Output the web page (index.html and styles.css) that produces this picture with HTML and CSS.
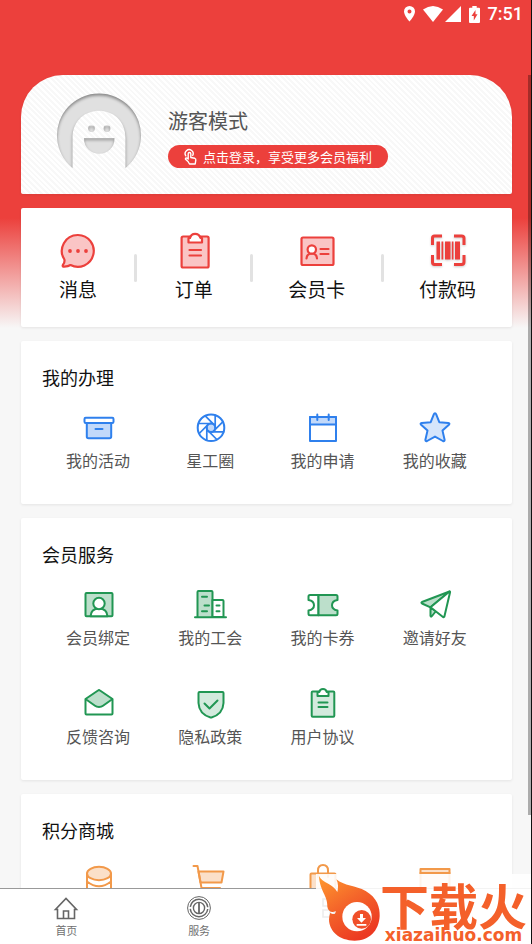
FILE: index.html
```html
<!DOCTYPE html>
<html lang="zh-CN">
<head>
<meta charset="utf-8">
<meta name="viewport" content="width=device-width, initial-scale=1">
<title>会员中心</title>
<link rel="stylesheet" href="styles.css">
</head>
<body>
<div class="app">
  <header class="status">
    <svg class="pin" width="11" height="16" viewBox="0 0 11 16"><path fill="#fff" fill-rule="evenodd" d="M5.500 0A5.500 5.500 0 0 0 0 5.500C0 9.500 5.500 15.500 5.500 15.500S11 9.500 11 5.500A5.500 5.500 0 0 0 5.500 0ZM5.500 3.600a2 2 0 1 1 0 4 2 2 0 0 1 0-4Z"/></svg>
    <svg class="wifi" width="20" height="16" viewBox="0 0 20 16"><path fill="#fff" d="M0 3.500Q10-3.500 20 3.500L10 16Z"/></svg>
    <svg class="signal" width="16" height="16" viewBox="0 0 16 16"><path fill="#fff" d="M16 0V16H0Z"/></svg>
    <svg class="battery" width="11" height="17" viewBox="0 0 11 17"><path fill="#fff" fill-rule="evenodd" d="M3.300 0h4.400v1.800H10q1 0 1 1V16q0 1-1 1H1q-1 0-1-1V2.800q0-1 1-1h2.300ZM6.500 4 2.500 10h2.300v4.500L8.500 8.300H6.500Z"/></svg>
    <time>7:51</time>
  </header>

  <main class="content">
    <section class="card profile">
      <svg class="avatar" width="84" height="75" viewBox="0 0 84 75">
        <defs>
          <filter id="inset" x="0" y="0" width="1" height="1" color-interpolation-filters="sRGB">
            <feComponentTransfer in="SourceAlpha" result="inv"><feFuncA type="table" tableValues="1 0"/></feComponentTransfer>
            <feGaussianBlur in="inv" stdDeviation="1.800"/>
            <feOffset dy="2" result="off"/>
            <feFlood flood-color="#000" flood-opacity=".4"/>
            <feComposite in2="off" operator="in"/>
            <feComposite in2="SourceAlpha" operator="in" result="shade"/>
            <feMerge><feMergeNode in="SourceGraphic"/><feMergeNode in="shade"/></feMerge>
          </filter>
          <filter id="ring" x="-.1" y="-.1" width="1.2" height="1.2" color-interpolation-filters="sRGB">
            <feComponentTransfer in="SourceAlpha" result="inv"><feFuncA type="table" tableValues="1 0"/></feComponentTransfer>
            <feGaussianBlur in="inv" stdDeviation="1.800"/>
            <feOffset dy="2" result="off"/>
            <feFlood flood-color="#000" flood-opacity=".4"/>
            <feComposite in2="off" operator="in"/>
            <feComposite in2="SourceAlpha" operator="in" result="shade"/>
            <feMerge><feMergeNode in="SourceGraphic"/><feMergeNode in="shade"/></feMerge>
          </filter>
        </defs>
        <g fill="#e0e0e0">
          <path filter="url(#ring)" d="M15.500 75A42 42 0 1 1 68.500 75V45C68.500 8.500 15.500 8.500 15.500 45Z"/>
          <circle filter="url(#ring)" cx="34.500" cy="35.500" r="3.400"/>
          <circle filter="url(#ring)" cx="50" cy="35.500" r="3.400"/>
          <path filter="url(#ring)" d="M27 45H57.500C57.500 66 27 66 27 45Z"/>
        </g>
      </svg>
      <div class="who">
        <h1>游客模式</h1>
        <button class="login" type="button">
          <svg width="13" height="16" viewBox="0 0 13 16" fill="none" stroke="#fff" stroke-width="1.400" stroke-linecap="round" stroke-linejoin="round"><path d="M1.800 6.800A4 4 0 1 1 8.700 6.500M4 12.500 1.500 10.200Q1.200 8.600 3 9.200L4.200 10V4.800a1.300 1.300 0 0 1 2.600 0V8.500l4 .8q1.200.4 1 1.800L11.200 15H5.500Z"/></svg>
          <span>点击登录，享受更多会员福利</span>
        </button>
      </div>
    </section>

    <nav class="card quick" aria-label="快捷入口">
      <a href="#"><svg class="red" width="36" height="36" viewBox="0 0 36 36"><path d="M18 2A15.900 15.900 0 1 1 10.500 32Q8 33.800 3.400 33.600 2.200 33.200 3 31.800 5 29.500 4.400 26.500A15.900 15.900 0 0 1 18 2Z"/><g class="dot"><circle cx="10" cy="18" r="1.900"/><circle cx="18" cy="18" r="1.900"/><circle cx="26" cy="18" r="1.900"/></g></svg><span>消息</span></a>
      <i></i>
      <a href="#"><svg class="red" width="36" height="36" viewBox="-1 0 36 36"><rect x="4.600" y="3.500" width="27" height="31" rx="1.500"/><path class="paper" d="M11.500 9.500V5H13Q14 .8 18.100.8T23.500 5H25V9.500Z"/><path class="line" d="M12.500 17h11.500M12.500 22.500h11.500"/></svg><span>订单</span></a>
      <i></i>
      <a href="#"><svg class="red" width="36" height="36" viewBox="-1 0 36 36"><rect x="1.500" y="4.500" width="32" height="27.500" rx="1.500"/><path class="line" d="M6.500 25.500Q7 20.500 11.800 20.500T17 25.500M20.500 16h8M20.500 21h8"/><circle class="paper" cx="11.800" cy="16.500" r="4.200"/></svg><span>会员卡</span></a>
      <i></i>
      <a href="#"><svg class="scan" width="36" height="36" viewBox="-1 0 36 36"><path class="line" d="M2.500 12V5Q2.500 3 4.500 3H12M24 3h7.500Q34 3 34 5v7M34 22v7Q34 31.500 31.500 31.500H24M12 31.500H4.500Q2.500 31.500 2.500 29V22"/><path class="bars" d="M6.500 8.500h3.500v18H6.500ZM11.500 8.500h1.800v18h-1.800ZM15 8.500h5.500v18H15ZM21.800 8.500h1.700v18h-1.700ZM25 8.500h5v18h-5Z"/></svg><span>付款码</span></a>
    </nav>

    <section class="card group">
      <h2>我的办理</h2>
      <div class="grid">
        <a href="#"><svg class="blue" width="32" height="32" viewBox="-1 0 32 32"><path d="M3.800 11H28.200V24.500Q28.200 26.300 26.500 26.300H5.500Q3.800 26.300 3.800 24.500Z"/><rect class="paper" x="1.500" y="5.700" width="29" height="5.300" rx="1.200"/><path class="line" d="M12.500 17h7"/></svg><span>我的活动</span></a>
        <a href="#"><svg class="blue" width="32" height="32" viewBox="-1 0 32 32"><circle class="paper" cx="16" cy="15.700" r="13.300"/><circle cx="16" cy="15.700" r="4.300"/><path class="line thin" d="M20.200 15.700V3.200M19 18.700 27.800 9.900M16 19.900H28.500M13 18.700 21.800 27.500M11.800 15.700V28.200M13 12.700 4.200 21.500M16 11.500H3.500M19 12.700 10.200 3.900"/></svg><span>星工圈</span></a>
        <a href="#"><svg class="blue" width="32" height="32" viewBox="0 0 32 32"><rect class="paper" x="3" y="5" width="26" height="24"/><rect x="3" y="5" width="26" height="7.500"/><path class="line" d="M10.300 2.500V8M21.700 2.500V8"/></svg><span>我的申请</span></a>
        <a href="#"><svg class="blue pale" width="32" height="32" viewBox="0 0 32 32"><path d="M16 1.300Q16.800 1.300 17.200 2.300L20.300 10.200 29.300 10.900Q31.200 11.300 29.900 12.700L23.500 18.600 25.600 27.700Q25.700 29.800 23.900 29L16 24.600 8.100 29Q6.300 29.800 6.400 27.700L8.500 18.600 2.100 12.700Q.8 11.300 2.700 10.900L11.700 10.200 14.800 2.300Q15.200 1.300 16 1.300Z"/></svg><span>我的收藏</span></a>
      </div>
    </section>

    <section class="card group">
      <h2>会员服务</h2>
      <div class="grid">
        <a href="#"><svg class="green" width="32" height="32" viewBox="-1 0 32 32"><rect x="2.500" y="4" width="27" height="23.300" rx="1"/><path class="paper" d="M7.500 27.300Q8 19.500 16 19.500T24.500 27.300Z"/><circle class="paper" cx="16" cy="14.500" r="5.700"/></svg><span>会员绑定</span></a>
        <a href="#"><svg class="green" width="32" height="32" viewBox="-1 0 32 32"><path d="M2.500 28V3Q2.500 2 3.500 2H16.500Q17.500 2 17.500 3V28"/><path class="paper" d="M17.500 11H27.500Q28.500 11 28.500 12V28H17.500Z"/><path class="line" d="M0 28.200H31M7 7.800h5M9.500 16.500h4.500M7 22.300h5M21.500 16.500h3M21.500 22.300h3"/></svg><span>我的工会</span></a>
        <a href="#"><svg class="green" width="32" height="32" viewBox="0 0 32 32"><path class="paper" d="M11.500 6H3Q1.500 6 1.500 7.500V11Q7 12 7 16.200T1.500 21.500V24.700Q1.500 26.200 3 26.200H11.500Z"/><path d="M11.500 6H29Q30.500 6 30.500 7.500V11Q25 12 25 16.200T30.500 21.500V24.700Q30.500 26.200 29 26.200H11.500Z"/></svg><span>我的卡券</span></a>
        <a href="#"><svg class="green" width="32" height="32" viewBox="0 0 32 32"><path d="M30.500 2.500 3 13Q1.800 13.800 3 14.500L11.500 18.300Z"/><path d="M11.500 18.300V27Q12 28.300 13 27L17 22Z"/><path class="paper" d="M30.500 2.500 11.500 18.300 24 28Q25.300 28.500 25.500 27L31 3.500Q31.300 2.300 30.500 2.500Z"/></svg><span>邀请好友</span></a>
        <a href="#"><svg class="green" width="32" height="32" viewBox="-1 0 32 32"><rect class="paper" x="2.500" y="11" width="27" height="15.500" rx="1"/><path d="M2.500 11 15 2.500Q16 1.700 17 2.500L29.500 11 20 17.800Q18.500 19 16 19T12 17.800Z"/></svg><span>反馈咨询</span></a>
        <a href="#"><svg class="green pale" width="32" height="32" viewBox="-1 0 32 32"><path d="M4.500 4H27.500Q28.500 4 28.500 5V15Q28 26 16.500 29.500Q16 29.700 15.500 29.500Q4 26 3.500 15V5Q3.500 4 4.500 4Z"/><path class="line" d="M9.500 15.500 14.500 20.500 22.500 12.500"/></svg><span>隐私政策</span></a>
        <a href="#"><svg class="green pale" width="32" height="32" viewBox="0 0 32 32"><rect x="4.700" y="3.500" width="22.600" height="25.200" rx="1"/><path class="paper" d="M10.500 8V4H12.300Q13 1 16 1T19.700 4H21.500V8Z"/><path class="line" d="M11.500 14.500h9M11.500 19h9"/></svg><span>用户协议</span></a>
      </div>
    </section>

    <section class="card group">
      <h2>积分商城</h2>
      <div class="grid">
        <a href="#" aria-label="积分"><svg class="orange" width="32" height="32" viewBox="-1 0 32 32"><path class="paper" d="M4 8.500V26Q16 34 28 26V8.500M4 16.500Q16 26 28 16.500"/><ellipse cx="16" cy="8.500" rx="12" ry="6.700"/></svg></a>
        <a href="#" aria-label="购物车"><svg class="orange" width="32" height="32" viewBox="0 0 32 32"><path d="M4.500 6.500H29.500L27.500 17.500H6.500Z"/><path class="line" d="M-.5 1H3.500L7.500 23H26"/></svg></a>
        <a href="#" aria-label="商品"><svg class="orange" width="32" height="32" viewBox="0 0 32 32"><rect x="3.500" y="8.500" width="25" height="22" rx="1"/><path class="line" d="M11 12V5.500Q11 0 16 0T21 5.500V12"/></svg></a>
        <a href="#" aria-label="卡券"><svg class="orange" width="32" height="32" viewBox="0 0 32 32"><rect x="1.500" y="4" width="29" height="24"/><path class="line" d="M1.500 8H30.500"/></svg></a>
      </div>
    </section>
  </main>

  <nav class="tabs" aria-label="主导航">
    <a href="#"><svg width="24" height="24" viewBox="0 0 24 24"><path d="M3.500 13.500H1.500L12 2.500 22.500 13.500H20.500V22.500H3.500ZM9.500 22.500V15H14.500V22.500"/></svg><span>首页</span></a>
    <a href="#"><svg width="24" height="24" viewBox="0 0 24 24"><circle cx="12" cy="12" r="11.400" stroke-width="1"/><circle cx="12" cy="12" r="8.800" stroke-width="1.500" stroke-dasharray="25.600 2" stroke-dashoffset="-1"/><circle cx="12" cy="12" r="5.600" stroke-width="1.400"/><path d="M12 6.500V17.500" stroke-width="1.800"/></svg><span>服务</span></a>
    <a href="#" aria-label="普惠"><svg width="24" height="24" viewBox="0 0 24 24"><path d="M3 3h7v7H3ZM14 3h7v7h-7ZM3 14h7v7H3ZM14 14h7v7h-7Z"/></svg></a>
    <a href="#" aria-label="我的"></a>
  </nav>

  <aside class="mark">
    <svg class="flame" width="61" height="65" viewBox="0 0 183 195">
      <defs><linearGradient id="fire" x1="0" y1="0" x2=".6" y2="1"><stop offset="0" stop-color="#ff9a2e"/><stop offset=".5" stop-color="#f4652a"/><stop offset="1" stop-color="#ec3a22"/></linearGradient></defs>
      <path fill="url(#fire)" d="M0 0C8 20 45 25 55 48C58 35 58 22 52 10C75 30 110 28 140 45C175 65 183 95 182 120C180 165 150 194 107 194C60 194 30 165 30 130Q30 120 34 110C45 118 50 114 50 105C38 112 27 105 25 92C27 60 2 45 0 0Z"/>
      <circle cx="114" cy="122" r="44" fill="#fff"/>
      <circle cx="128" cy="130" r="28" fill="#f0502a"/>
      <path fill="#fff" d="M123 114h9v12h9L127.500 140 114 126h9ZM113 144h29v5h-29Z"/>
    </svg>
    <div class="words"><strong>下载火</strong><b>xiazaihuo.com</b></div>
  </aside>
  <div class="thumb"></div>
</div>
</body>
</html>
```
FILE: styles.css
```css
* { box-sizing: border-box; }

body {
  margin: 0;
  font-family: "Noto Sans CJK SC", sans-serif;
  color: #111;
}

h1, h2 { margin: 0; font-weight: 400; }
a { color: inherit; text-decoration: none; }
svg { display: block; flex: none; overflow: visible; }

.app {
  position: relative;
  display: flex;
  flex-direction: column;
  height: 100vh;
  overflow: hidden;
  border-right: 1px solid #111;
  background: linear-gradient(#ec403c 0, #ec403c 218px, #f7f7f7 328px);
}

.status {
  display: flex;
  flex: none;
  align-items: center;
  justify-content: flex-end;
  height: 28px;
  padding-right: 8px;
  color: #fff;
  font: 500 18px/28px Roboto, sans-serif;
}
.wifi { margin-left: 8px; }
.signal { margin-left: 2px; }
.battery { margin: 0 8px; }

.content {
  display: flex;
  flex: 1;
  flex-direction: column;
  gap: 14px;
  min-height: 0;
  padding: 47px 19px 0 21px;
  overflow: hidden;
}

.card {
  flex: none;
  border-radius: 2px;
  background: #fff;
  box-shadow: 0 1px 3px rgba(0, 0, 0, .08);
}

.profile {
  display: flex;
  align-items: flex-end;
  gap: 27px;
  padding: 18px 36px 26px;
  border-radius: 42px 42px 2px 2px;
  background: repeating-linear-gradient(45deg, #fff 0 2px, #f8f8f8 2px 4px);
}
.who { display: flex; flex-direction: column; align-items: flex-start; gap: 10px; }
.who h1 { color: #555; font-size: 20px; line-height: 28px; }
.login {
  display: flex;
  align-items: center;
  gap: 6px;
  height: 23px;
  padding: 0 16px;
  border: 0;
  border-radius: 12px;
  background: #ec403c;
  color: #fff;
  font: 13px/22px "Noto Sans CJK SC", sans-serif;
}

.quick {
  display: flex;
  align-items: center;
  justify-content: space-between;
  padding: 25px 36px;
}
.quick a {
  display: flex;
  flex-direction: column;
  align-items: center;
  gap: 7px;
  min-width: 42px;
  font-size: 19px;
  line-height: 26px;
}
.quick i { width: 3px; height: 28px; border-radius: 2px; background: #e2e2e2; }
.quick svg { stroke-width: 2.2; }

.group { padding: 25px 21px 33px; }
.group h2 { margin-bottom: 24px; font-size: 18px; line-height: 22px; }
.grid { display: grid; grid-template-columns: repeat(4, 1fr); row-gap: 40px; }
.grid a {
  display: flex;
  flex-direction: column;
  align-items: center;
  gap: 5px;
  color: #555;
  font-size: 16px;
  line-height: 22px;
}
.grid svg { stroke-width: 2; }

svg.red, svg.blue, svg.green, svg.orange { stroke-linecap: round; stroke-linejoin: round; }
.red { stroke: #ec403c; fill: #fac5c5; }
.blue { stroke: #2f80ed; fill: #c2d9fa; }
.blue.pale { fill: #d5e5fb; }
.green { stroke: #219653; fill: #bcdfcb; }
.green.pale { fill: #d3eadd; }
.orange { stroke: #f2994a; fill: #fbe0c9; }
svg .paper { fill: #fff; }
svg .line { fill: none; }
svg .thin { stroke-width: 1.7; }
.dot { fill: #ec403c; stroke: none; }
.scan { filter: drop-shadow(0 1px 1px rgba(0, 0, 0, .2)); }
.scan .line { stroke: #ec403c; stroke-width: 3; }
.scan .bars { fill: #ec403c; }

.tabs {
  display: grid;
  flex: none;
  grid-template-columns: repeat(4, 1fr);
  height: 56px;
  padding-top: 7px;
  border-top: 1px solid #999;
  background: #fff;
}
.tabs a {
  display: flex;
  flex-direction: column;
  align-items: center;
  gap: 2px;
  color: #707070;
  font-size: 11px;
  line-height: 16px;
}
.tabs svg { fill: none; stroke: #666; stroke-width: 1.6; }

.mark {
  position: absolute;
  right: 0;
  bottom: 0;
  display: flex;
  align-items: flex-end;
  padding: 2px 4px 0 3px;
  background: rgba(255, 255, 255, .88);
  color: #f4602a;
}
.flame { margin-bottom: 3px; }
.words { display: flex; flex-direction: column; align-items: center; }
.words strong { font-size: 49px; font-weight: 700; line-height: 44px; }
.words b { font: 700 17px/18px "DejaVu Sans", sans-serif; }

.thumb {
  position: absolute;
  top: 75px;
  right: 0;
  bottom: 129px;
  width: 3px;
  background: rgba(0, 0, 0, .3);
}
```
